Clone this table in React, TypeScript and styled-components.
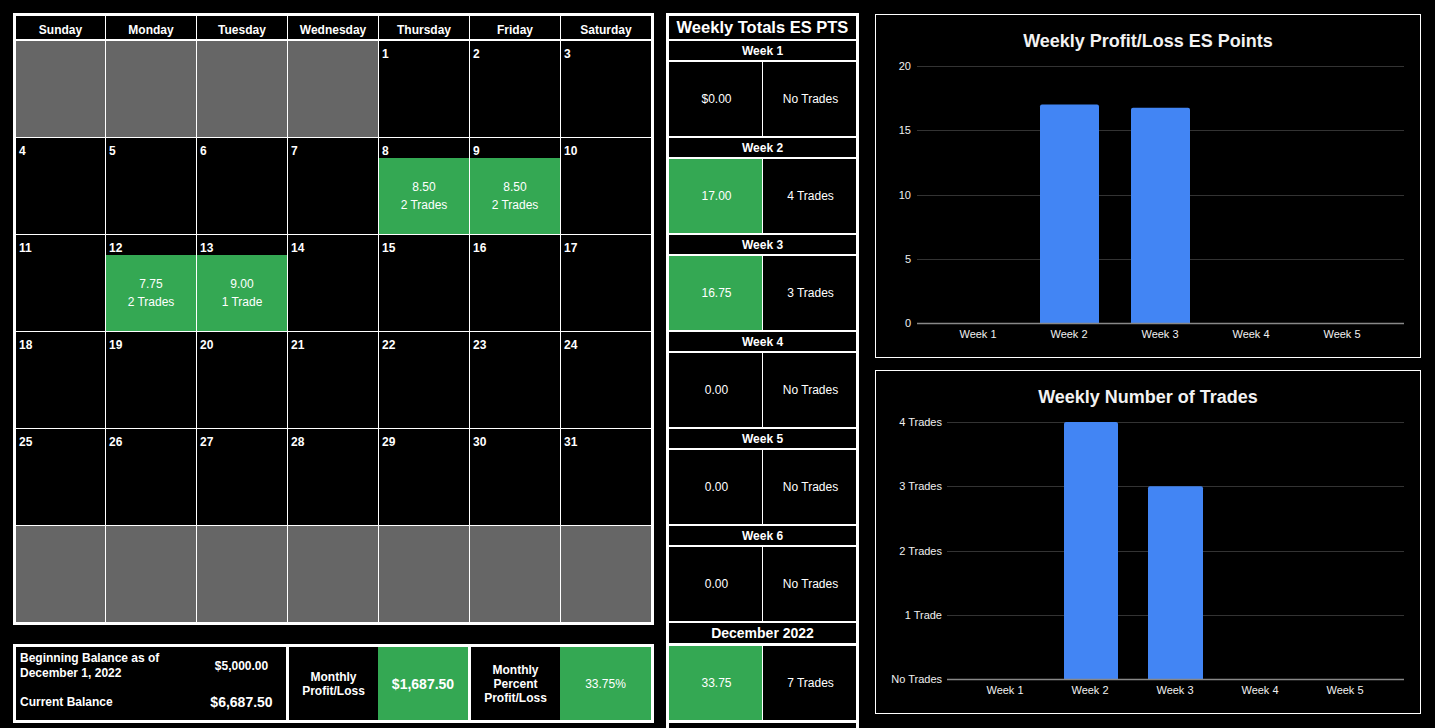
import React from 'react';
import styled, { createGlobalStyle } from 'styled-components';

const GlobalStyle = createGlobalStyle`
  html, body {
    margin: 0;
    padding: 0;
    background: #000;
    overflow: hidden;
  }
  body {
    font-family: "Liberation Sans", Arial, sans-serif;
    color: #fff;
  }
`;

const GREEN = '#34a853';
const GRAY = '#666666';
const COLS = '89px repeat(6, 90px)';

const Page = styled.div`
  display: flex;
  align-items: flex-start;
  padding: 13px 0 0 13px;
  height: 728px;
  box-sizing: border-box;
  overflow: hidden;
`;

const LeftColumn = styled.div`
  display: flex;
  flex-direction: column;
  gap: 19px;
`;

const Calendar = styled.div`
  display: flex;
  flex-direction: column;
  gap: 2px;
  background: #fff;
  border: 3px solid #fff;
`;

const HeaderRow = styled.div`
  display: grid;
  grid-template-columns: ${COLS};
  gap: 1px;
  height: 23px;
`;

const HeaderCell = styled.div`
  background: #000;
  display: flex;
  align-items: flex-end;
  justify-content: center;
  padding-bottom: 2px;
  box-sizing: border-box;
  font-size: 12px;
  font-weight: bold;
  line-height: 14px;
`;

const DaysGrid = styled.div`
  display: grid;
  grid-template-columns: ${COLS};
  grid-auto-rows: 96px;
  gap: 1px;
`;

const DayCell = styled.div<{ $blank?: boolean }>`
  display: grid;
  grid-template-rows: 20px 1fr;
  background: ${(p) => (p.$blank ? GRAY : '#000')};
`;

const DayNumber = styled.div`
  display: flex;
  align-items: flex-end;
  padding: 0 3px 0;
  font-size: 12px;
  font-weight: bold;
  line-height: 14px;
`;

const DayResult = styled.div`
  background: ${GREEN};
  display: flex;
  flex-direction: column;
  align-items: center;
  justify-content: center;
  font-size: 12px;
  line-height: 18px;
`;

const Summary = styled.div`
  display: flex;
  gap: 3px;
  background: #fff;
  border: 3px solid #fff;
  height: 73px;
`;

const BalanceSection = styled.div`
  width: 270px;
  display: grid;
  grid-template-columns: 181px 89px;
  grid-template-rows: 37px 36px;
  background: #000;
`;

const BalanceLabel = styled.div`
  display: flex;
  align-items: center;
  padding-left: 4px;
  font-size: 12px;
  font-weight: bold;
  line-height: 15px;
`;

const BalanceValue = styled.div<{ $big?: boolean }>`
  display: flex;
  align-items: center;
  justify-content: center;
  font-weight: bold;
  font-size: ${(p) => (p.$big ? '14px' : '12px')};
`;

const MetricSection = styled.div<{ $width: number }>`
  width: ${(p) => p.$width}px;
  display: grid;
  grid-template-columns: 89px 1fr;
  background: #000;
`;

const MetricLabel = styled.div`
  display: flex;
  align-items: center;
  justify-content: center;
  text-align: center;
  font-size: 12px;
  font-weight: bold;
  line-height: 14px;
`;

const MetricValue = styled.div<{ $big?: boolean }>`
  background: ${GREEN};
  display: flex;
  align-items: center;
  justify-content: center;
  font-size: ${(p) => (p.$big ? '14px' : '12px')};
  font-weight: ${(p) => (p.$big ? 'bold' : 'normal')};
`;

const Weekly = styled.div`
  margin-left: 12px;
  width: 187px;
  border: 3px solid #fff;
  border-bottom: none;
  background: #fff;
  display: flex;
  flex-direction: column;
  gap: 2px;
`;

const WeeklyTitle = styled.div`
  height: 23px;
  background: #000;
  display: flex;
  align-items: center;
  justify-content: center;
  font-size: 16.5px;
  font-weight: bold;
  white-space: nowrap;
`;

const WeekHeader = styled.div<{ $month?: boolean }>`
  height: ${(p) => (p.$month ? '20px' : '19px')};
  margin-bottom: ${(p) => (p.$month ? '1px' : '0')};
  background: #000;
  display: flex;
  align-items: center;
  justify-content: center;
  font-size: ${(p) => (p.$month ? '14px' : '12px')};
  font-weight: bold;
`;

const WeekData = styled.div<{ $last?: boolean }>`
  height: 74px;
  margin-bottom: ${(p) => (p.$last ? '1px' : '0')};
  display: grid;
  grid-template-columns: 1fr 1fr;
  gap: 1px;
`;

const WeekValue = styled.div<{ $green?: boolean }>`
  background: ${(p) => (p.$green ? GREEN : '#000')};
  display: flex;
  align-items: center;
  justify-content: center;
  padding-left: 2px;
  font-size: 12px;
`;

const FillerRow = styled.div`
  height: 40px;
  background: #000;
`;

const ChartsColumn = styled.div`
  margin-left: 16px;
  margin-top: 1px;
  display: flex;
  flex-direction: column;
  gap: 12px;
`;

const ChartBox = styled.div`
  width: 546px;
  height: 344px;
  box-sizing: border-box;
  border: 1px solid #fff;
  background: #000;
`;

const ChartSvg = styled.svg`
  display: block;
  font-family: "Liberation Sans", Arial, sans-serif;
`;

type Day = { n?: number; pts?: string; trades?: string };

const days: Day[] = [
  {}, {}, {}, {},
  { n: 1 }, { n: 2 }, { n: 3 },
  { n: 4 }, { n: 5 }, { n: 6 }, { n: 7 },
  { n: 8, pts: '8.50', trades: '2 Trades' },
  { n: 9, pts: '8.50', trades: '2 Trades' },
  { n: 10 },
  { n: 11 },
  { n: 12, pts: '7.75', trades: '2 Trades' },
  { n: 13, pts: '9.00', trades: '1 Trade' },
  { n: 14 }, { n: 15 }, { n: 16 }, { n: 17 },
  { n: 18 }, { n: 19 }, { n: 20 }, { n: 21 }, { n: 22 }, { n: 23 }, { n: 24 },
  { n: 25 }, { n: 26 }, { n: 27 }, { n: 28 }, { n: 29 }, { n: 30 }, { n: 31 },
  {}, {}, {}, {}, {}, {}, {},
];

const weekdays = ['Sunday', 'Monday', 'Tuesday', 'Wednesday', 'Thursday', 'Friday', 'Saturday'];

const weeks = [
  { name: 'Week 1', pts: '$0.00', trades: 'No Trades', green: false },
  { name: 'Week 2', pts: '17.00', trades: '4 Trades', green: true },
  { name: 'Week 3', pts: '16.75', trades: '3 Trades', green: true },
  { name: 'Week 4', pts: '0.00', trades: 'No Trades', green: false },
  { name: 'Week 5', pts: '0.00', trades: 'No Trades', green: false },
  { name: 'Week 6', pts: '0.00', trades: 'No Trades', green: false },
];

type ChartSpec = {
  title: string;
  yLabels: string[];
  labelRight: number;
  gridLeft: number;
  xCenters: number[];
  bars: { x: number; w: number; v: number }[];
  max: number;
};

const BASE = 309;
const TOP = 52;
const GRID_RIGHT = 529;

const Chart: React.FC<{ spec: ChartSpec }> = ({ spec }) => {
  const steps = spec.yLabels.length - 1;
  const ys = spec.yLabels.map((_, i) => TOP + ((BASE - TOP) * i) / steps);
  const scale = (BASE - TOP) / spec.max;
  return (
    <ChartBox>
      <ChartSvg width={544} height={342} viewBox="1 1 544 342">
        <text x={273} y={32.5} textAnchor="middle" fontSize={18} fontWeight="bold" fill="#f2f2f2">
          {spec.title}
        </text>
        {ys.slice(0, -1).map((y, i) => (
          <line key={i} x1={spec.gridLeft} x2={GRID_RIGHT} y1={Math.round(y) + 0.5} y2={Math.round(y) + 0.5} stroke="#333" strokeWidth={1} />
        ))}
        {spec.yLabels.map((l, i) => (
          <text key={l} x={spec.labelRight} y={ys[i] + 4} textAnchor="end" fontSize={11} fill="#f0f0f0">
            {l}
          </text>
        ))}
        {spec.bars.map((b, i) => {
          const top = BASE - b.v * scale;
          const r = 2;
          const d = `M${b.x},${BASE} V${top + r} Q${b.x},${top} ${b.x + r},${top} H${b.x + b.w - r} Q${b.x + b.w},${top} ${b.x + b.w},${top + r} V${BASE} Z`;
          return <path key={i} d={d} fill="#4285f4" />;
        })}
        <line x1={spec.gridLeft} x2={GRID_RIGHT} y1={BASE + 0.5} y2={BASE + 0.5} stroke="#888" strokeWidth={1.5} />
        {spec.xCenters.map((x, i) => (
          <text key={i} x={x} y={324} textAnchor="middle" fontSize={11} fill="#f0f0f0">
            {`Week ${i + 1}`}
          </text>
        ))}
      </ChartSvg>
    </ChartBox>
  );
};

const pointsChart: ChartSpec = {
  title: 'Weekly Profit/Loss ES Points',
  yLabels: ['20', '15', '10', '5', '0'],
  labelRight: 36,
  gridLeft: 42,
  xCenters: [103, 194, 285, 376, 467],
  bars: [
    { x: 165, w: 59, v: 17 },
    { x: 256, w: 59, v: 16.75 },
  ],
  max: 20,
};

const tradesChart: ChartSpec = {
  title: 'Weekly Number of Trades',
  yLabels: ['4 Trades', '3 Trades', '2 Trades', '1 Trade', 'No Trades'],
  labelRight: 67,
  gridLeft: 72,
  xCenters: [130, 215, 300, 385, 470],
  bars: [
    { x: 189, w: 54, v: 4 },
    { x: 273, w: 55, v: 3 },
  ],
  max: 4,
};

export default function App() {
  return (
    <>
      <GlobalStyle />
      <Page>
        <LeftColumn>
          <Calendar>
            <HeaderRow>
              {weekdays.map((d) => (
                <HeaderCell key={d}>{d}</HeaderCell>
              ))}
            </HeaderRow>
            <DaysGrid>
              {days.map((d, i) => (
                <DayCell key={i} $blank={d.n === undefined}>
                  {d.n !== undefined && <DayNumber>{d.n}</DayNumber>}
                  {d.pts && (
                    <DayResult>
                      <span>{d.pts}</span>
                      <span>{d.trades}</span>
                    </DayResult>
                  )}
                </DayCell>
              ))}
            </DaysGrid>
          </Calendar>
          <Summary>
            <BalanceSection>
              <BalanceLabel>
                Beginning Balance as of
                <br />
                December 1, 2022
              </BalanceLabel>
              <BalanceValue>$5,000.00</BalanceValue>
              <BalanceLabel>Current Balance</BalanceLabel>
              <BalanceValue $big>$6,687.50</BalanceValue>
            </BalanceSection>
            <MetricSection $width={179}>
              <MetricLabel>
                Monthly
                <br />
                Profit/Loss
              </MetricLabel>
              <MetricValue $big>$1,687.50</MetricValue>
            </MetricSection>
            <MetricSection $width={180}>
              <MetricLabel>
                Monthly
                <br />
                Percent
                <br />
                Profit/Loss
              </MetricLabel>
              <MetricValue>33.75%</MetricValue>
            </MetricSection>
          </Summary>
        </LeftColumn>
        <Weekly>
          <WeeklyTitle>Weekly Totals ES PTS</WeeklyTitle>
          {weeks.map((w) => (
            <React.Fragment key={w.name}>
              <WeekHeader>{w.name}</WeekHeader>
              <WeekData>
                <WeekValue $green={w.green}>{w.pts}</WeekValue>
                <WeekValue>{w.trades}</WeekValue>
              </WeekData>
            </React.Fragment>
          ))}
          <WeekHeader $month>December 2022</WeekHeader>
          <WeekData $last>
            <WeekValue $green>33.75</WeekValue>
            <WeekValue>7 Trades</WeekValue>
          </WeekData>
          <FillerRow />
        </Weekly>
        <ChartsColumn>
          <Chart spec={pointsChart} />
          <Chart spec={tradesChart} />
        </ChartsColumn>
      </Page>
    </>
  );
}
